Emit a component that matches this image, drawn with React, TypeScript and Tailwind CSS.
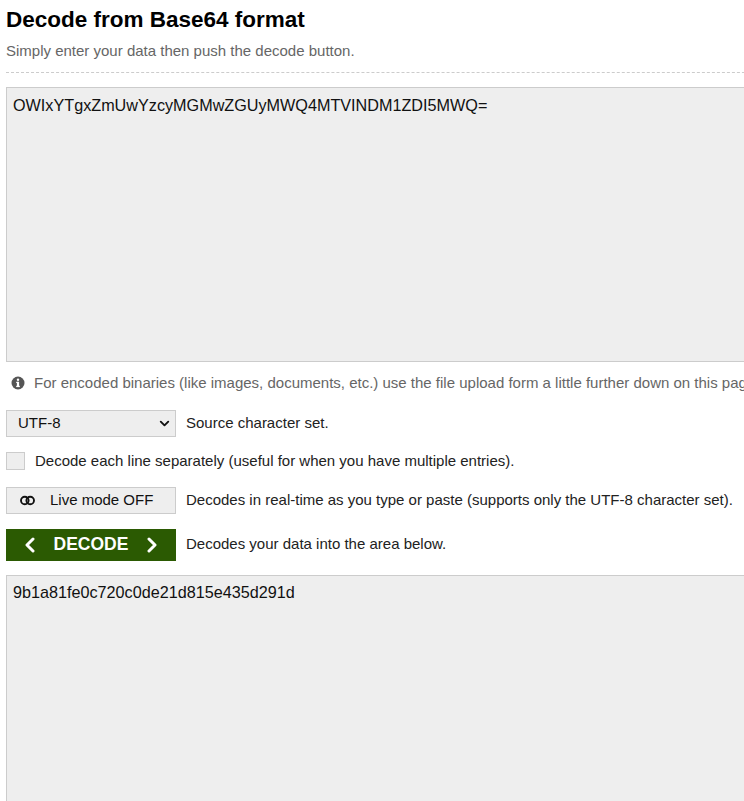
import { ChevronDown } from "lucide-react";

const font = { fontFamily: '"Liberation Sans", Arial, sans-serif' };

function InfoIcon() {
  return (
    <svg width="14" height="14" viewBox="0 0 14 14" className="shrink-0">
      <circle cx="7" cy="7" r="6.5" fill="#555" />
      <circle cx="7" cy="3.8" r="1.2" fill="#fff" />
      <rect x="5.9" y="5.8" width="2.2" height="5" fill="#fff" />
      <rect x="5.2" y="9.8" width="3.6" height="1.3" fill="#fff" />
      <rect x="5.2" y="5.8" width="2.2" height="1.2" fill="#fff" />
    </svg>
  );
}

function ToggleIcon() {
  return (
    <svg width="15" height="11" viewBox="0 0 15 11" className="shrink-0">
      <circle cx="4.8" cy="5.5" r="3.8" fill="none" stroke="#111" strokeWidth="1.9" />
      <circle cx="10.2" cy="5.5" r="3.8" fill="none" stroke="#111" strokeWidth="1.9" />
    </svg>
  );
}

function Chevron({ dir }: { dir: "left" | "right" }) {
  return (
    <svg width="12" height="16" viewBox="0 0 12 16">
      <path
        d={dir === "left" ? "M9 2 L3 8 L9 14" : "M3 2 L9 8 L3 14"}
        fill="none"
        stroke="#fff"
        strokeWidth="3"
        strokeLinecap="round"
        strokeLinejoin="round"
      />
    </svg>
  );
}

export default function App() {
  return (
    <div className="w-[744px] h-[801px] overflow-hidden bg-white text-[#222]" style={font}>
      <div className="w-[790px] pl-[6px]">
        <h1 className="text-[22.5px] font-bold leading-none pt-[9px] text-black">Decode from Base64 format</h1>
        <p className="text-[15px] text-[#666] mt-[11px] leading-none">Simply enter your data then push the decode button.</p>
        <div className="border-t border-dashed border-[#ccc] mt-[14px]" />

        <textarea
          readOnly
          defaultValue="OWIxYTgxZmUwYzcyMGMwZGUyMWQ4MTVINDM1ZDI5MWQ="
          className="block w-full h-[275px] mt-[14px] bg-[#eee] border border-[#ccc] px-[6px] pt-[8px] pb-[7px] text-[16.2px] leading-[19px] text-[#111] resize-none outline-none"
          style={font}
        />

        <div className="flex items-center gap-[9px] mt-[10px] pl-[5px] text-[15px] text-[#666] whitespace-nowrap">
          <InfoIcon />
          <span>For encoded binaries (like images, documents, etc.) use the file upload form a little further down on this page.</span>
        </div>

        <div className="flex items-center gap-[10px] mt-[16px] text-[15px] whitespace-nowrap">
          <div className="relative w-[170px] h-[27px] bg-[#eee] border border-[#ccc] flex items-center pl-[11px] text-[15px] text-[#111]">
            UTF-8
            <ChevronDown size={15} strokeWidth={3} className="absolute right-[3px] top-[5px] text-[#111]" />
          </div>
          <span>Source character set.</span>
        </div>

        <div className="flex items-center gap-[10px] mt-[13px] text-[15px] whitespace-nowrap">
          <div className="w-[19px] h-[18px] bg-[#eee] border border-[#ccc]" />
          <span>Decode each line separately (useful for when you have multiple entries).</span>
        </div>

        <div className="flex items-center gap-[10px] mt-[14px] text-[15px] whitespace-nowrap">
          <div className="w-[170px] h-[27px] bg-[#eee] border border-[#ccc] flex items-center pl-[13px] gap-[15px] text-[15px] text-[#111]">
            <ToggleIcon />
            <span>Live mode OFF</span>
          </div>
          <span>Decodes in real-time as you type or paste (supports only the UTF-8 character set).</span>
        </div>

        <div className="flex items-center gap-[10px] mt-[15px] text-[15px] whitespace-nowrap">
          <div className="w-[170px] h-[32px] bg-[#2b5a02] flex items-center justify-between px-[18px] text-white">
            <Chevron dir="left" />
            <span className="text-[17.5px] font-bold">DECODE</span>
            <Chevron dir="right" />
          </div>
          <span>Decodes your data into the area below.</span>
        </div>

        <textarea
          readOnly
          defaultValue="9b1a81fe0c720c0de21d815e435d291d"
          className="block w-full h-[276px] mt-[14px] bg-[#eee] border border-[#ccc] px-[6px] py-[7px] text-[16.2px] leading-[19px] text-[#111] resize-none outline-none"
          style={font}
        />
      </div>
    </div>
  );
}
